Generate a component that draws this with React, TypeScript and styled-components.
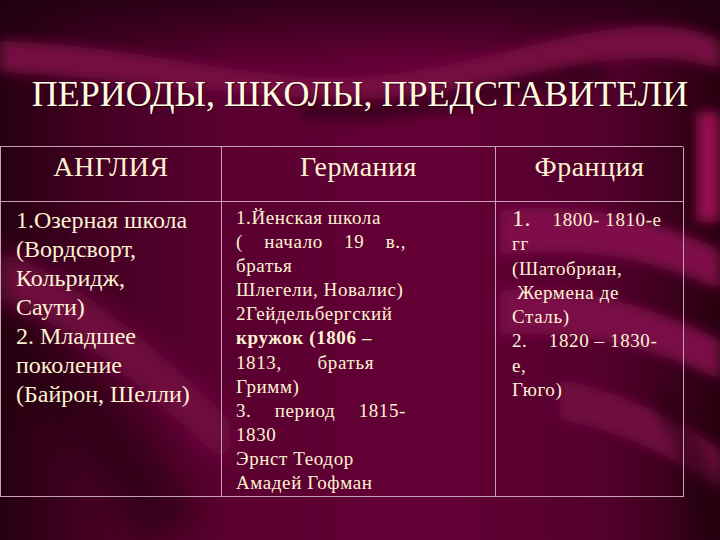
import React from 'react';
import styled, { createGlobalStyle } from 'styled-components';

const GlobalStyle = createGlobalStyle`
  html, body {
    margin: 0;
    padding: 0;
    background: #3a001f;
  }
`;

const Slide = styled.div`
  position: relative;
  width: 720px;
  height: 540px;
  overflow: hidden;
  color: #fdf2d2;
  background: linear-gradient(90deg, #26000f 0%, #420022 12%, #5a0030 32%, #640036 60%, #52002c 84%, #28000f 100%);
`;

const Backdrop = styled.svg`
  position: absolute;
  inset: 0;
  width: 720px;
  height: 540px;
`;

const Content = styled.div`
  position: relative;
  display: flex;
  flex-direction: column;
  padding-top: 76px;
`;

const Title = styled.h1`
  margin: 0 0 34px 0;
  font-family: "Liberation Serif", serif;
  font-size: 36px;
  line-height: 36px;
  font-weight: normal;
  text-align: center;
  color: #fffbe2;
  text-shadow: 1px 1px 1px rgba(20, 0, 10, 0.6);
`;

const Table = styled.div`
  display: grid;
  grid-template-columns: 221px 274px 188px;
  grid-template-rows: 55px 295px;
  width: 683px;
  border-top: 1px solid #c7a2b8;
  border-left: 1px solid #c7a2b8;
  box-sizing: border-box;
`;

const Cell = styled.div`
  font-family: "Liberation Serif", serif;
  border-right: 1px solid #c7a2b8;
  border-bottom: 1px solid #c7a2b8;
  box-sizing: border-box;
`;

const HeadCell = styled(Cell)`
  font-size: 28px;
  line-height: 32px;
  letter-spacing: 0.5px;
  padding-top: 4px;
  text-align: center;
`;

const BodyCell = styled(Cell)<{ $size: number; $lh: number; $pad: number; $track: number }>`
  font-size: ${p => p.$size}px;
  line-height: ${p => p.$lh}px;
  letter-spacing: ${p => p.$track}px;
  padding: 4px 0 0 ${p => p.$pad}px;
`;

const Column = styled.div<{ $width: number }>`
  width: ${p => p.$width}px;
`;

const Line = styled.div<{ $justify?: boolean; $w?: number }>`
  width: ${p => (p.$w ? `${p.$w}px` : 'auto')};
  text-align: ${p => (p.$justify ? 'justify' : 'left')};
  text-align-last: ${p => (p.$justify ? 'justify' : 'left')};
  white-space: ${p => (p.$justify ? 'normal' : 'pre')};
`;

const Big = styled.span`
  font-size: 24px;
`;

const Bold = styled.span`
  font-weight: bold;
`;

function Background() {
  return (
    <Backdrop viewBox="0 0 720 540">
      <defs>
        <filter id="soft" x="-20%" y="-20%" width="140%" height="140%">
          <feGaussianBlur stdDeviation="6" />
        </filter>
        <filter id="softer" x="-20%" y="-20%" width="140%" height="140%">
          <feGaussianBlur stdDeviation="12" />
        </filter>
        <linearGradient id="pillar" x1="0" x2="1" y1="0" y2="0">
          <stop offset="0" stopColor="#6a0a3c" />
          <stop offset="0.5" stopColor="#a8105a" />
          <stop offset="1" stopColor="#7a0a44" />
        </linearGradient>
        <linearGradient id="topDark" x1="0" x2="0" y1="0" y2="1">
          <stop offset="0" stopColor="#1e000f" stopOpacity="0.75" />
          <stop offset="1" stopColor="#1e000f" stopOpacity="0" />
        </linearGradient>
      </defs>
      <rect x="0" y="0" width="720" height="60" fill="url(#topDark)" />
      <path d="M0 40 C120 46 200 68 300 76 C420 86 520 40 620 28 C670 22 700 30 720 40 L720 70 C690 58 650 55 600 62 C500 76 420 108 300 98 C200 90 100 78 0 72 Z" fill="#760a43" filter="url(#soft)" />
      <path d="M300 100 C420 110 500 76 600 62 L610 80 C500 96 420 130 300 118 Z" fill="#24000f" opacity="0.55" filter="url(#soft)" />
      <path d="M0 250 C60 270 140 330 230 420 L230 470 C140 380 60 320 0 300 Z" fill="#740a42" filter="url(#softer)" />
      <path d="M0 330 C80 360 150 430 200 520 L140 540 C100 470 50 410 0 390 Z" fill="#24000f" opacity="0.5" filter="url(#softer)" />
      <path d="M500 210 C580 200 660 220 720 250 L720 290 C660 260 580 245 500 255 Z" fill="#7e0c49" filter="url(#soft)" />
      <path d="M500 290 C590 285 660 310 720 340 L720 380 C660 350 590 330 500 335 Z" fill="#7a0b46" filter="url(#soft)" />
      <path d="M560 380 C620 390 680 420 720 450 L720 490 C680 460 620 430 560 420 Z" fill="#700a40" filter="url(#soft)" />
      <path d="M660 390 C690 420 710 460 720 480 L720 540 L690 540 C690 500 680 450 660 420 Z" fill="#24000f" opacity="0.5" filter="url(#soft)" />
      <rect x="696" y="112" width="24" height="110" fill="url(#pillar)" filter="url(#soft)" />
    </Backdrop>
  );
}

export default function App() {
  return (
    <>
      <GlobalStyle />
      <Slide>
        <Background />
        <Content>
          <Title>ПЕРИОДЫ, ШКОЛЫ, ПРЕДСТАВИТЕЛИ</Title>
          <Table>
            <HeadCell>АНГЛИЯ</HeadCell>
            <HeadCell>Германия</HeadCell>
            <HeadCell>Франция</HeadCell>
            <BodyCell $size={24} $lh={29} $pad={15} $track={0}>
              <Column $width={200}>
                <Line>1.Озерная школа</Line>
                <Line>(Вордсворт,</Line>
                <Line>Кольридж,</Line>
                <Line>Саути)</Line>
                <Line>2. Младшее</Line>
                <Line>поколение</Line>
                <Line>(Байрон, Шелли)</Line>
              </Column>
            </BodyCell>
            <BodyCell $size={19} $lh={24.1} $pad={14} $track={0.6}>
              <Column $width={170}>
                <Line>1.Йенская школа</Line>
                <Line $justify>( начало 19 в.,</Line>
                <Line>братья</Line>
                <Line>Шлегели, Новалис)</Line>
                <Line>2Гейдельбергский</Line>
                <Line><Bold>кружок (1806 –</Bold></Line>
                <Line $justify $w={138}>1813, братья</Line>
                <Line>Гримм)</Line>
                <Line $justify>3. период 1815-</Line>
                <Line>1830</Line>
                <Line>Эрнст Теодор</Line>
                <Line>Амадей Гофман</Line>
              </Column>
            </BodyCell>
            <BodyCell $size={19} $lh={24.3} $pad={16} $track={0.6}>
              <Column $width={152}>
                <Line><Big>1.</Big>    1800- 1810-е</Line>
                <Line>гг</Line>
                <Line>(Шатобриан,</Line>
                <Line> Жермена де</Line>
                <Line>Сталь)</Line>
                <Line>2.    1820 – 1830-</Line>
                <Line>е,</Line>
                <Line>Гюго)</Line>
              </Column>
            </BodyCell>
          </Table>
        </Content>
      </Slide>
    </>
  );
}
